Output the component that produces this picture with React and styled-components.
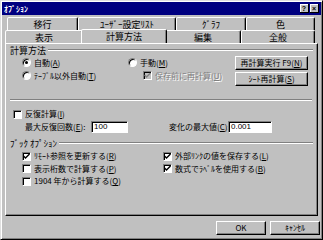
import React from 'react';
import styled, { createGlobalStyle } from 'styled-components';

const GlobalStyle = createGlobalStyle`
  html, body {
    margin: 0;
    padding: 0;
    background: #c0c0c0;
  }
  body {
    font-family: "Noto Sans CJK JP", "Noto Sans", sans-serif;
  }
`;

const raised = `
  border-style: solid;
  border-width: 1px;
  border-color: #fff #000 #000 #fff;
  box-shadow: inset -1px -1px #808080;
`;

const Window = styled.div`
  width: 323px;
  height: 240px;
  box-sizing: border-box;
  background: #c0c0c0;
  border: 1px solid;
  border-color: #dfdfdf #000 #000 #dfdfdf;
  box-shadow: inset 1px 1px #fff, inset -1px -1px #808080;
  padding: 1px;
  display: flex;
  flex-direction: column;
  font-size: 8px;
  line-height: 1;
  color: #000;
`;

const TitleBar = styled.div`
  height: 13px;
  background: #000080;
  color: #fff;
  font-weight: bold;
  display: flex;
  align-items: center;
  justify-content: space-between;
  padding: 0 2px 0 2px;
`;

const TitleButtons = styled.div`
  display: flex;
  gap: 1px;
`;

const TitleButton = styled.div`
  width: 9px;
  height: 9px;
  box-sizing: border-box;
  background: #c0c0c0;
  color: #000;
  font-family: "Liberation Sans", sans-serif;
  font-size: 7px;
  font-weight: bold;
  display: flex;
  align-items: center;
  justify-content: center;
  border-style: solid;
  border-width: 0 1px 1px 0;
  border-color: #000;
  box-shadow: inset 1px 1px #fff;
`;

const TabStrip = styled.div`
  margin-top: 2px;
  display: flex;
  flex-direction: column;
  position: relative;
  z-index: 1;
  font-size: 9px;
`;

const TabRow = styled.div`
  display: flex;
  height: 13px;
  padding-left: ${p => p.$indent}px;
`;

const Tab = styled.div`
  width: ${p => p.$w}px;
  box-sizing: border-box;
  border-style: solid;
  border-width: 1px 1px 0 1px;
  border-color: #fff #000 transparent #fff;
  border-radius: 2px 2px 0 0;
  box-shadow: inset -1px 0 #808080;
  display: flex;
  align-items: center;
  justify-content: center;
  background: #c0c0c0;
  ${p => p.$active && `
    height: 14px;
    margin: -1px -2px -1px -2px;
    width: ${p.$w + 4}px;
    position: relative;
    z-index: 2;
  `}
`;

const Panel = styled.div`
  margin: 0 3px 0 3px;
  height: 173px;
  box-sizing: border-box;
  ${raised}
  display: flex;
  flex-direction: column;
  padding: 0 4px 0 3px;
`;

const GroupHeader = styled.div`
  display: flex;
  align-items: center;
  gap: 2px;
  height: 10px;
  margin-top: ${p => p.$top}px;
  padding-left: 1px;
  font-size: 9px;
  &::after {
    content: "";
    flex: 1;
    height: 0;
    border-top: 1px solid #808080;
    border-bottom: 1px solid #fff;
  }
`;

const CalcBody = styled.div`
  display: flex;
  margin-top: 1px;
  height: 30px;
`;

const OptionGrid = styled.div`
  display: grid;
  grid-template-columns: ${p => p.$cols};
  grid-auto-rows: ${p => p.$row}px;
  padding-left: ${p => p.$left}px;
  margin-top: ${p => p.$top || 0}px;
  flex: ${p => (p.$grow ? 1 : 'none')};
`;

const Option = styled.label`
  display: flex;
  align-items: center;
  gap: 3px;
  white-space: nowrap;
  padding-left: ${p => p.$indent || 0}px;
  color: ${p => (p.$disabled ? '#808080' : '#000')};
  text-shadow: ${p => (p.$disabled ? '1px 1px 0 #fff' : 'none')};
`;

const Radio = styled.span`
  width: 9px;
  height: 9px;
  box-sizing: border-box;
  border-radius: 50%;
  background: #fff;
  border: 1px solid;
  border-color: #808080 #fff #fff #808080;
  box-shadow: inset 1px 1px #000;
  display: flex;
  align-items: center;
  justify-content: center;
  flex-shrink: 0;
  &::after {
    content: "";
    width: 3px;
    height: 3px;
    border-radius: 50%;
    background: ${p => (p.$on ? '#000' : 'transparent')};
  }
`;

const Box = styled.span`
  width: 9px;
  height: 9px;
  box-sizing: border-box;
  background: ${p => (p.$disabled ? '#c0c0c0' : '#fff')};
  border: 1px solid;
  border-color: #808080 #fff #fff #808080;
  box-shadow: inset 1px 1px #000;
  display: flex;
  align-items: center;
  justify-content: center;
  flex-shrink: 0;
`;

const ButtonColumn = styled.div`
  display: flex;
  flex-direction: column;
  gap: 2px;
  margin-right: 5px;
`;

const Button = styled.div`
  width: ${p => p.$w}px;
  height: 14px;
  box-sizing: border-box;
  ${raised}
  display: flex;
  align-items: center;
  justify-content: center;
  white-space: nowrap;
`;

const Separator = styled.div`
  margin: 13px 1px 0 1px;
  border-top: 1px solid #808080;
  border-bottom: 1px solid #fff;
`;

const Row = styled.div`
  display: flex;
  align-items: center;
  height: ${p => p.$h}px;
  margin-top: ${p => p.$top || 0}px;
  padding-left: ${p => p.$left}px;
  white-space: nowrap;
`;

const FieldLabel = styled.span`
  width: ${p => p.$w}px;
`;

const Field = styled.div`
  width: ${p => p.$w}px;
  height: 12px;
  box-sizing: border-box;
  background: #fff;
  border: 1px solid;
  border-color: #808080 #fff #fff #808080;
  box-shadow: inset 1px 1px #000;
  font-family: "Liberation Sans", sans-serif;
  font-size: 8px;
  display: flex;
  align-items: center;
  padding-left: 2px;
  margin-right: ${p => p.$gap || 0}px;
`;

const Footer = styled.div`
  display: flex;
  justify-content: flex-end;
  gap: 4px;
  padding: 5px 1px 0 0;
`;

const U = styled.span`
  text-decoration: underline;
`;

const Check = ({ color = '#000' }) => (
  <svg width="7" height="7" viewBox="0 0 7 7">
    <path d="M0.5 3 L2.5 5 L6.5 1" fill="none" stroke={color} strokeWidth="1.4" />
  </svg>
);

const CheckBox = ({ on, disabled, indent, children }) => (
  <Option $disabled={disabled} $indent={indent}>
    <Box $disabled={disabled}>{on && <Check color={disabled ? '#808080' : '#000'} />}</Box>
    <span>{children}</span>
  </Option>
);

const RadioOption = ({ on, children }) => (
  <Option>
    <Radio $on={on} />
    <span>{children}</span>
  </Option>
);

export default function App() {
  return (
    <>
      <GlobalStyle />
      <Window>
        <TitleBar>
          <span>ｵﾌﾟｼｮﾝ</span>
          <TitleButtons>
            <TitleButton>?</TitleButton>
            <TitleButton>×</TitleButton>
          </TitleButtons>
        </TitleBar>

        <TabStrip>
          <TabRow $indent={5}>
            <Tab $w={71}>移行</Tab>
            <Tab $w={98}>ﾕｰｻﾞｰ設定ﾘｽﾄ</Tab>
            <Tab $w={70}>ｸﾞﾗﾌ</Tab>
            <Tab $w={69}>色</Tab>
          </TabRow>
          <TabRow $indent={3}>
            <Tab $w={78}>表示</Tab>
            <Tab $w={82} $active>計算方法</Tab>
            <Tab $w={76}>編集</Tab>
            <Tab $w={74}>全般</Tab>
          </TabRow>
        </TabStrip>

        <Panel>
          <GroupHeader $top={1}>計算方法</GroupHeader>
          <CalcBody>
            <OptionGrid $cols="106px 1fr" $row={13} $left={13} $grow>
              <RadioOption on>自動(<U>A</U>)</RadioOption>
              <RadioOption>手動(<U>M</U>)</RadioOption>
              <RadioOption>ﾃｰﾌﾞﾙ以外自動(<U>T</U>)</RadioOption>
              <CheckBox on disabled indent={15}>保存前に再計算(<U>U</U>)</CheckBox>
            </OptionGrid>
            <ButtonColumn>
              <Button $w={73}>再計算実行 F9(<U>N</U>)</Button>
              <Button $w={73}>ｼｰﾄ再計算(<U>S</U>)</Button>
            </ButtonColumn>
          </CalcBody>
          <Separator />
          <Row $h={12} $top={7} $left={4}>
            <CheckBox>反復計算(<U>I</U>)</CheckBox>
          </Row>
          <Row $h={12} $top={1} $left={16}>
            <FieldLabel $w={66}>最大反復回数(<U>E</U>):</FieldLabel>
            <Field $w={37} $gap={41}>100</Field>
            <FieldLabel $w={59}>変化の最大値(<U>C</U>):</FieldLabel>
            <Field $w={44}>0.001</Field>
          </Row>
          <GroupHeader $top={5}>ﾌﾞｯｸ ｵﾌﾟｼｮﾝ</GroupHeader>
          <OptionGrid $cols="141px 1fr" $row={12.5} $left={13} $top={2}>
            <CheckBox on>ﾘﾓｰﾄ参照を更新する(<U>R</U>)</CheckBox>
            <CheckBox on>外部ﾘﾝｸの値を保存する(<U>L</U>)</CheckBox>
            <CheckBox>表示桁数で計算する(<U>P</U>)</CheckBox>
            <CheckBox on>数式でﾗﾍﾞﾙを使用する(<U>B</U>)</CheckBox>
            <CheckBox>1904 年から計算する(<U>Q</U>)</CheckBox>
          </OptionGrid>
        </Panel>

        <Footer>
          <Button $w={50}>OK</Button>
          <Button $w={50}>ｷｬﾝｾﾙ</Button>
        </Footer>
      </Window>
    </>
  );
}
